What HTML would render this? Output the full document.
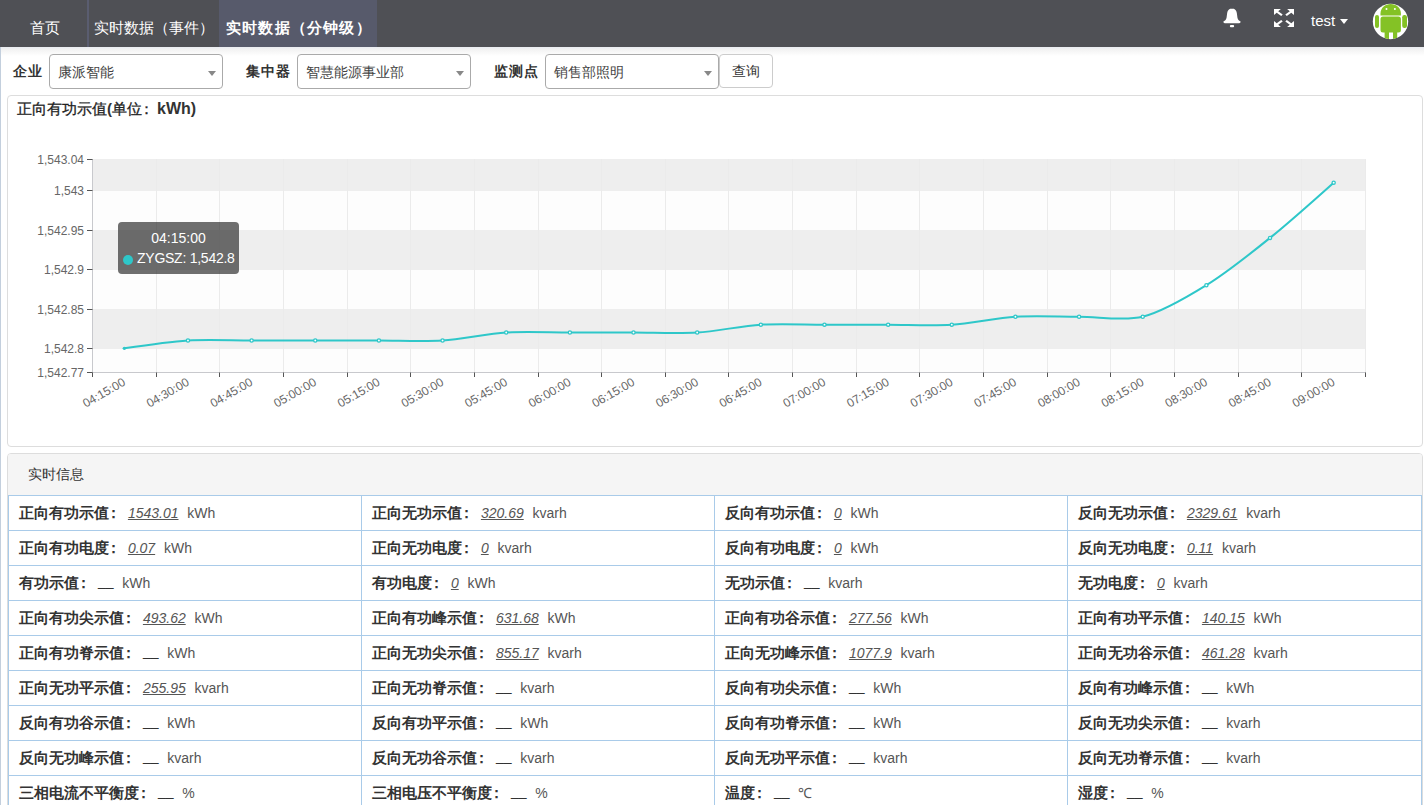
<!DOCTYPE html>
<html><head><meta charset="utf-8">
<style>
*{box-sizing:border-box}
html,body{margin:0;padding:0;width:1424px;height:805px;overflow:hidden;background:#fff;font-family:"Liberation Sans",sans-serif;font-size:14px;color:#333}
.abs{position:absolute}
#hdr{position:absolute;left:0;top:0;width:1424px;height:47px;background:#4f5055}
.tab{position:absolute;top:0;height:46px;color:#fff;font-size:15px;line-height:20px;padding-top:18px;white-space:nowrap}
#shadow{position:absolute;left:0;top:47px;width:1424px;height:9px;background:linear-gradient(#e9ecf1,#f3f3f3 30%,#fff)}
#sideline{position:absolute;left:0;top:47px;width:1px;height:760px;background:#c3cfdd}
.flab{position:absolute;top:61px;font-weight:bold;font-size:14px;line-height:20px;color:#333;letter-spacing:1px}
.sel{position:absolute;top:54px;width:174px;height:35px;border:1px solid #aaa;border-radius:4px;background:#fff}
.sel span{position:absolute;left:8px;top:7px;line-height:20px;font-size:14px;color:#444}
.sel i{position:absolute;right:6px;top:16px;width:0;height:0;border-left:4px solid transparent;border-right:4px solid transparent;border-top:5px solid #888}
#btn{position:absolute;left:719px;top:54px;width:54px;height:34px;border:1px solid #ccc;border-radius:4px;background:#fff;text-align:center;line-height:32px;color:#333}
#p1{position:absolute;left:7px;top:95px;width:1416px;height:352px;border:1px solid #ddd;border-radius:4px;background:#fff}
#title{position:absolute;left:17px;top:99px;font-weight:bold;font-size:15px;line-height:20px;color:#333}
#tip{position:absolute;left:118px;top:222px;width:121px;height:52px;border-radius:4px;background:rgba(50,50,50,0.7);color:#fff;font-size:14px}
#p2{position:absolute;left:7px;top:453px;width:1416px;height:400px;border:1px solid #ddd;border-radius:4px;background:#fff;overflow:hidden}
#p2h{position:absolute;left:0;top:0;width:100%;height:42px;background:#f5f5f5}
.hl{position:absolute;left:8px;width:1414px;height:1px;background:#a9cbe9}
.vl{position:absolute;top:495px;width:1px;height:320px;background:#a9cbe9}
.cell{position:absolute;height:35px;line-height:35px;margin-top:1px;white-space:nowrap;font-size:14px;color:#555}
.lb{font-weight:bold;color:#333;font-size:15px;line-height:10px}
.cl{position:relative;left:-3px}
.v{font-style:italic;text-decoration:underline;color:#555}
.e{color:#333;position:relative;top:-2px}
.u{color:#555;margin-left:1px}
</style></head><body>
<div id="hdr"></div>
<div class="tab" style="left:0;width:87px;padding-left:30px">首页</div>
<div class="abs" style="left:87px;top:0;width:2px;height:47px;background:#5a5d70"></div>
<div class="tab" style="left:89px;width:130px;padding-left:5px">实时数据（事件）</div>
<div class="abs" style="left:219px;top:0;width:158px;height:47px;background:#575a6b"></div>
<div class="tab" style="left:219px;width:158px;padding-left:7px;font-weight:bold;letter-spacing:1.2px">实时数据（分钟级）</div>
<!-- right icons -->
<svg class="abs" style="left:1220px;top:5px" width="25" height="25" viewBox="0 0 25 25">
<path d="M10.2 3.7L13.8 3.7C15.6 4.5 16.6 6 16.9 8.5L17.4 12.5C17.7 14.5 18.8 15.6 20.6 16.6C20.6 17.6 20 18.3 19.2 18.3L4.8 18.3C4 18.3 3.4 17.6 3.4 16.6C5.2 15.6 6.3 14.5 6.6 12.5L7.1 8.5C7.4 6 8.4 4.5 10.2 3.7Z" fill="#fff"/>
<rect x="9.9" y="20" width="4.2" height="2.2" rx="1" fill="#fff"/>
</svg>
<svg class="abs" style="left:1274px;top:9px" width="20" height="18" viewBox="0 0 20 18">
<defs><path id="fsa" d="M0 0L6.9 0L4.2 2.3L8.7 5.4L7.2 7.0L2.7 3.8L0 6.1Z" fill="#fff"/></defs>
<use href="#fsa"/>
<use href="#fsa" transform="translate(20 0) scale(-1 1)"/>
<use href="#fsa" transform="translate(0 18) scale(1 -1)"/>
<use href="#fsa" transform="translate(20 18) scale(-1 -1)"/>
</svg>
<div class="abs" style="left:1311px;top:11px;color:#fff;font-size:15px;line-height:20px">test</div>
<div class="abs" style="left:1339.5px;top:19px;width:0;height:0;border-left:4.7px solid transparent;border-right:4.7px solid transparent;border-top:5px solid #fff"></div>
<svg class="abs" style="left:1372px;top:3px" width="37" height="37" viewBox="0 0 37 37">
<defs><clipPath id="cc"><circle cx="18.5" cy="18.5" r="17.7"/></clipPath></defs>
<circle cx="18.5" cy="18.5" r="17.7" fill="#fff"/>
<g clip-path="url(#cc)" fill="#84c225">
<path d="M8.5 10.5C8.5 5 13 1 18.7 1C24.4 1 28.9 5 28.9 10.5V12.6H8.5Z"/>
<rect x="8.5" y="13.6" width="20.4" height="16" rx="2.5"/>
<rect x="3" y="12" width="4" height="13" rx="2"/>
<rect x="30.2" y="12" width="4.8" height="13" rx="2.2"/>
<rect x="12.6" y="26" width="4.4" height="14"/>
<rect x="21" y="26" width="4.2" height="14"/>
</g>
<circle cx="14.5" cy="6" r="1" fill="#fff"/><circle cx="22.9" cy="6" r="1" fill="#fff"/>
</svg>
<div id="shadow"></div>
<div id="sideline"></div>
<div class="flab" style="left:13px">企业</div>
<div class="sel" style="left:49px"><span>康派智能</span><i></i></div>
<div class="flab" style="left:246px">集中器</div>
<div class="sel" style="left:297px"><span>智慧能源事业部</span><i></i></div>
<div class="flab" style="left:494px">监测点</div>
<div class="sel" style="left:545px"><span>销售部照明</span><i></i></div>
<div id="btn">查询</div>
<div id="p1"></div>
<div id="title"><span style="font-weight:normal;color:#222;-webkit-text-stroke:0.3px #222">正向有功示值</span>(<span style="font-weight:normal;color:#222;-webkit-text-stroke:0.3px #222">单位<span style="position:relative;left:-3px">：</span></span><span style="font-size:16px">kWh)</span></div>
<svg width="1424" height="805" style="position:absolute;left:0;top:0">
<rect x="92.5" y="159" width="1273" height="213" fill="#fdfdfd"/>
<rect x="92.5" y="159" width="1273" height="32" fill="#eeeeee"/>
<rect x="92.5" y="230" width="1273" height="40" fill="#eeeeee"/>
<rect x="92.5" y="309" width="1273" height="40" fill="#eeeeee"/>
<line x1="156.5" y1="159" x2="156.5" y2="372" stroke="#ebebeb" stroke-width="1"/>
<line x1="219.5" y1="159" x2="219.5" y2="372" stroke="#ebebeb" stroke-width="1"/>
<line x1="283.5" y1="159" x2="283.5" y2="372" stroke="#ebebeb" stroke-width="1"/>
<line x1="347.5" y1="159" x2="347.5" y2="372" stroke="#ebebeb" stroke-width="1"/>
<line x1="410.5" y1="159" x2="410.5" y2="372" stroke="#ebebeb" stroke-width="1"/>
<line x1="474.5" y1="159" x2="474.5" y2="372" stroke="#ebebeb" stroke-width="1"/>
<line x1="538.5" y1="159" x2="538.5" y2="372" stroke="#ebebeb" stroke-width="1"/>
<line x1="601.5" y1="159" x2="601.5" y2="372" stroke="#ebebeb" stroke-width="1"/>
<line x1="665.5" y1="159" x2="665.5" y2="372" stroke="#ebebeb" stroke-width="1"/>
<line x1="728.5" y1="159" x2="728.5" y2="372" stroke="#ebebeb" stroke-width="1"/>
<line x1="792.5" y1="159" x2="792.5" y2="372" stroke="#ebebeb" stroke-width="1"/>
<line x1="856.5" y1="159" x2="856.5" y2="372" stroke="#ebebeb" stroke-width="1"/>
<line x1="919.5" y1="159" x2="919.5" y2="372" stroke="#ebebeb" stroke-width="1"/>
<line x1="983.5" y1="159" x2="983.5" y2="372" stroke="#ebebeb" stroke-width="1"/>
<line x1="1047.5" y1="159" x2="1047.5" y2="372" stroke="#ebebeb" stroke-width="1"/>
<line x1="1110.5" y1="159" x2="1110.5" y2="372" stroke="#ebebeb" stroke-width="1"/>
<line x1="1174.5" y1="159" x2="1174.5" y2="372" stroke="#ebebeb" stroke-width="1"/>
<line x1="1238.5" y1="159" x2="1238.5" y2="372" stroke="#ebebeb" stroke-width="1"/>
<line x1="1301.5" y1="159" x2="1301.5" y2="372" stroke="#ebebeb" stroke-width="1"/>
<line x1="1365.5" y1="159" x2="1365.5" y2="372" stroke="#ebebeb" stroke-width="1"/>
<line x1="92.5" y1="159" x2="92.5" y2="372.5" stroke="#c8c9cd" stroke-width="1"/>
<line x1="92.5" y1="372.5" x2="1366" y2="372.5" stroke="#c8c9cd" stroke-width="1"/>
<line x1="87" y1="372.5" x2="92.5" y2="372.5" stroke="#555" stroke-width="1"/>
<text x="84" y="376.8" text-anchor="end" font-size="12" fill="#666">1,542.77</text>
<line x1="87" y1="348.5" x2="92.5" y2="348.5" stroke="#555" stroke-width="1"/>
<text x="84" y="352.8" text-anchor="end" font-size="12" fill="#666">1,542.8</text>
<line x1="87" y1="309.5" x2="92.5" y2="309.5" stroke="#555" stroke-width="1"/>
<text x="84" y="313.8" text-anchor="end" font-size="12" fill="#666">1,542.85</text>
<line x1="87" y1="269.5" x2="92.5" y2="269.5" stroke="#555" stroke-width="1"/>
<text x="84" y="273.8" text-anchor="end" font-size="12" fill="#666">1,542.9</text>
<line x1="87" y1="230.5" x2="92.5" y2="230.5" stroke="#555" stroke-width="1"/>
<text x="84" y="234.8" text-anchor="end" font-size="12" fill="#666">1,542.95</text>
<line x1="87" y1="190.5" x2="92.5" y2="190.5" stroke="#555" stroke-width="1"/>
<text x="84" y="194.8" text-anchor="end" font-size="12" fill="#666">1,543</text>
<line x1="87" y1="159.5" x2="92.5" y2="159.5" stroke="#555" stroke-width="1"/>
<text x="84" y="163.8" text-anchor="end" font-size="12" fill="#666">1,543.04</text>
<line x1="92.5" y1="372.5" x2="92.5" y2="377" stroke="#555" stroke-width="1"/>
<line x1="156.5" y1="372.5" x2="156.5" y2="377" stroke="#555" stroke-width="1"/>
<line x1="219.5" y1="372.5" x2="219.5" y2="377" stroke="#555" stroke-width="1"/>
<line x1="283.5" y1="372.5" x2="283.5" y2="377" stroke="#555" stroke-width="1"/>
<line x1="347.5" y1="372.5" x2="347.5" y2="377" stroke="#555" stroke-width="1"/>
<line x1="410.5" y1="372.5" x2="410.5" y2="377" stroke="#555" stroke-width="1"/>
<line x1="474.5" y1="372.5" x2="474.5" y2="377" stroke="#555" stroke-width="1"/>
<line x1="538.5" y1="372.5" x2="538.5" y2="377" stroke="#555" stroke-width="1"/>
<line x1="601.5" y1="372.5" x2="601.5" y2="377" stroke="#555" stroke-width="1"/>
<line x1="665.5" y1="372.5" x2="665.5" y2="377" stroke="#555" stroke-width="1"/>
<line x1="728.5" y1="372.5" x2="728.5" y2="377" stroke="#555" stroke-width="1"/>
<line x1="792.5" y1="372.5" x2="792.5" y2="377" stroke="#555" stroke-width="1"/>
<line x1="856.5" y1="372.5" x2="856.5" y2="377" stroke="#555" stroke-width="1"/>
<line x1="919.5" y1="372.5" x2="919.5" y2="377" stroke="#555" stroke-width="1"/>
<line x1="983.5" y1="372.5" x2="983.5" y2="377" stroke="#555" stroke-width="1"/>
<line x1="1047.5" y1="372.5" x2="1047.5" y2="377" stroke="#555" stroke-width="1"/>
<line x1="1110.5" y1="372.5" x2="1110.5" y2="377" stroke="#555" stroke-width="1"/>
<line x1="1174.5" y1="372.5" x2="1174.5" y2="377" stroke="#555" stroke-width="1"/>
<line x1="1238.5" y1="372.5" x2="1238.5" y2="377" stroke="#555" stroke-width="1"/>
<line x1="1301.5" y1="372.5" x2="1301.5" y2="377" stroke="#555" stroke-width="1"/>
<line x1="1365.5" y1="372.5" x2="1365.5" y2="377" stroke="#555" stroke-width="1"/>
<text transform="translate(124.3 381) rotate(-30)" x="0" y="4" text-anchor="end" font-size="12" fill="#666">04:15:00</text>
<text transform="translate(188.0 381) rotate(-30)" x="0" y="4" text-anchor="end" font-size="12" fill="#666">04:30:00</text>
<text transform="translate(251.6 381) rotate(-30)" x="0" y="4" text-anchor="end" font-size="12" fill="#666">04:45:00</text>
<text transform="translate(315.3 381) rotate(-30)" x="0" y="4" text-anchor="end" font-size="12" fill="#666">05:00:00</text>
<text transform="translate(378.9 381) rotate(-30)" x="0" y="4" text-anchor="end" font-size="12" fill="#666">05:15:00</text>
<text transform="translate(442.6 381) rotate(-30)" x="0" y="4" text-anchor="end" font-size="12" fill="#666">05:30:00</text>
<text transform="translate(506.2 381) rotate(-30)" x="0" y="4" text-anchor="end" font-size="12" fill="#666">05:45:00</text>
<text transform="translate(569.9 381) rotate(-30)" x="0" y="4" text-anchor="end" font-size="12" fill="#666">06:00:00</text>
<text transform="translate(633.5 381) rotate(-30)" x="0" y="4" text-anchor="end" font-size="12" fill="#666">06:15:00</text>
<text transform="translate(697.2 381) rotate(-30)" x="0" y="4" text-anchor="end" font-size="12" fill="#666">06:30:00</text>
<text transform="translate(760.8 381) rotate(-30)" x="0" y="4" text-anchor="end" font-size="12" fill="#666">06:45:00</text>
<text transform="translate(824.5 381) rotate(-30)" x="0" y="4" text-anchor="end" font-size="12" fill="#666">07:00:00</text>
<text transform="translate(888.1 381) rotate(-30)" x="0" y="4" text-anchor="end" font-size="12" fill="#666">07:15:00</text>
<text transform="translate(951.8 381) rotate(-30)" x="0" y="4" text-anchor="end" font-size="12" fill="#666">07:30:00</text>
<text transform="translate(1015.4 381) rotate(-30)" x="0" y="4" text-anchor="end" font-size="12" fill="#666">07:45:00</text>
<text transform="translate(1079.1 381) rotate(-30)" x="0" y="4" text-anchor="end" font-size="12" fill="#666">08:00:00</text>
<text transform="translate(1142.7 381) rotate(-30)" x="0" y="4" text-anchor="end" font-size="12" fill="#666">08:15:00</text>
<text transform="translate(1206.4 381) rotate(-30)" x="0" y="4" text-anchor="end" font-size="12" fill="#666">08:30:00</text>
<text transform="translate(1270.0 381) rotate(-30)" x="0" y="4" text-anchor="end" font-size="12" fill="#666">08:45:00</text>
<text transform="translate(1333.7 381) rotate(-30)" x="0" y="4" text-anchor="end" font-size="12" fill="#666">09:00:00</text>
<path d="M124.33 348.33 C124.33 348.33 168.81 341.63 187.97 340.44 C207.00 339.27 232.53 340.44 251.62 340.44 C270.72 340.44 296.18 340.44 315.27 340.44 C334.37 340.44 359.83 340.44 378.93 340.44 C398.02 340.44 423.55 341.62 442.57 340.44 C461.74 339.26 487.06 333.74 506.22 332.56 C525.25 331.38 550.78 332.56 569.88 332.56 C588.97 332.56 614.43 332.56 633.52 332.56 C652.62 332.56 678.15 333.73 697.17 332.56 C716.34 331.37 741.66 325.85 760.82 324.67 C779.85 323.49 805.38 324.67 824.48 324.67 C843.57 324.67 869.03 324.67 888.12 324.67 C907.22 324.67 932.75 325.84 951.77 324.67 C970.94 323.48 996.26 317.96 1015.42 316.78 C1034.45 315.60 1059.98 316.78 1079.07 316.78 C1098.17 316.78 1124.68 321.25 1142.72 316.78 C1162.87 311.78 1188.33 296.40 1206.38 285.22 C1226.52 272.74 1251.51 252.81 1270.02 237.89 C1289.70 222.04 1333.67 182.66 1333.67 182.66" fill="none" stroke="#2ec7c9" stroke-width="2"/>
<circle cx="124.33" cy="348.33" r="1.7" fill="#2ec7c9"/>
<circle cx="187.97" cy="340.44" r="1.6" fill="#fff" stroke="#2ec7c9" stroke-width="1.3"/>
<circle cx="251.62" cy="340.44" r="1.6" fill="#fff" stroke="#2ec7c9" stroke-width="1.3"/>
<circle cx="315.27" cy="340.44" r="1.6" fill="#fff" stroke="#2ec7c9" stroke-width="1.3"/>
<circle cx="378.93" cy="340.44" r="1.6" fill="#fff" stroke="#2ec7c9" stroke-width="1.3"/>
<circle cx="442.57" cy="340.44" r="1.6" fill="#fff" stroke="#2ec7c9" stroke-width="1.3"/>
<circle cx="506.22" cy="332.56" r="1.6" fill="#fff" stroke="#2ec7c9" stroke-width="1.3"/>
<circle cx="569.88" cy="332.56" r="1.6" fill="#fff" stroke="#2ec7c9" stroke-width="1.3"/>
<circle cx="633.52" cy="332.56" r="1.6" fill="#fff" stroke="#2ec7c9" stroke-width="1.3"/>
<circle cx="697.17" cy="332.56" r="1.6" fill="#fff" stroke="#2ec7c9" stroke-width="1.3"/>
<circle cx="760.82" cy="324.67" r="1.6" fill="#fff" stroke="#2ec7c9" stroke-width="1.3"/>
<circle cx="824.48" cy="324.67" r="1.6" fill="#fff" stroke="#2ec7c9" stroke-width="1.3"/>
<circle cx="888.12" cy="324.67" r="1.6" fill="#fff" stroke="#2ec7c9" stroke-width="1.3"/>
<circle cx="951.77" cy="324.67" r="1.6" fill="#fff" stroke="#2ec7c9" stroke-width="1.3"/>
<circle cx="1015.42" cy="316.78" r="1.6" fill="#fff" stroke="#2ec7c9" stroke-width="1.3"/>
<circle cx="1079.07" cy="316.78" r="1.6" fill="#fff" stroke="#2ec7c9" stroke-width="1.3"/>
<circle cx="1142.72" cy="316.78" r="1.6" fill="#fff" stroke="#2ec7c9" stroke-width="1.3"/>
<circle cx="1206.38" cy="285.22" r="1.6" fill="#fff" stroke="#2ec7c9" stroke-width="1.3"/>
<circle cx="1270.02" cy="237.89" r="1.6" fill="#fff" stroke="#2ec7c9" stroke-width="1.3"/>
<circle cx="1333.67" cy="182.66" r="1.6" fill="#fff" stroke="#2ec7c9" stroke-width="1.3"/>
</svg>
<div id="tip">
<div class="abs" style="left:0;top:6px;width:121px;text-align:center;line-height:20px">04:15:00</div>
<div class="abs" style="left:5px;top:33px;width:10px;height:10px;border-radius:5px;background:#2ec7c9"></div>
<div class="abs" style="left:19px;top:26px;line-height:20px;white-space:nowrap;letter-spacing:-0.25px">ZYGSZ: 1,542.8</div>
</div>
<div id="p2"><div id="p2h"></div></div>
<div class="abs" style="left:28px;top:464px;line-height:20px;color:#333">实时信息</div>
<div class="hl" style="top:495px"></div>
<div class="hl" style="top:530px"></div>
<div class="hl" style="top:565px"></div>
<div class="hl" style="top:600px"></div>
<div class="hl" style="top:635px"></div>
<div class="hl" style="top:670px"></div>
<div class="hl" style="top:705px"></div>
<div class="hl" style="top:740px"></div>
<div class="hl" style="top:775px"></div>
<div class="hl" style="top:810px"></div>
<div class="vl" style="left:8px"></div>
<div class="vl" style="left:361px"></div>
<div class="vl" style="left:714px"></div>
<div class="vl" style="left:1067px"></div>
<div class="vl" style="left:1421px"></div>
<div class="cell" style="left:19px;top:495px"><span class="lb">正向有功示值<span class="cl">：</span></span> <span class="v">1543.01</span> &nbsp;<span class="u">kWh</span></div>
<div class="cell" style="left:372px;top:495px"><span class="lb">正向无功示值<span class="cl">：</span></span> <span class="v">320.69</span> &nbsp;<span class="u">kvarh</span></div>
<div class="cell" style="left:725px;top:495px"><span class="lb">反向有功示值<span class="cl">：</span></span> <span class="v">0</span> &nbsp;<span class="u">kWh</span></div>
<div class="cell" style="left:1078px;top:495px"><span class="lb">反向无功示值<span class="cl">：</span></span> <span class="v">2329.61</span> &nbsp;<span class="u">kvarh</span></div>
<div class="cell" style="left:19px;top:530px"><span class="lb">正向有功电度<span class="cl">：</span></span> <span class="v">0.07</span> &nbsp;<span class="u">kWh</span></div>
<div class="cell" style="left:372px;top:530px"><span class="lb">正向无功电度<span class="cl">：</span></span> <span class="v">0</span> &nbsp;<span class="u">kvarh</span></div>
<div class="cell" style="left:725px;top:530px"><span class="lb">反向有功电度<span class="cl">：</span></span> <span class="v">0</span> &nbsp;<span class="u">kWh</span></div>
<div class="cell" style="left:1078px;top:530px"><span class="lb">反向无功电度<span class="cl">：</span></span> <span class="v">0.11</span> &nbsp;<span class="u">kvarh</span></div>
<div class="cell" style="left:19px;top:565px"><span class="lb">有功示值<span class="cl">：</span></span> <span class="e">__</span> &nbsp;<span class="u">kWh</span></div>
<div class="cell" style="left:372px;top:565px"><span class="lb">有功电度<span class="cl">：</span></span> <span class="v">0</span> &nbsp;<span class="u">kWh</span></div>
<div class="cell" style="left:725px;top:565px"><span class="lb">无功示值<span class="cl">：</span></span> <span class="e">__</span> &nbsp;<span class="u">kvarh</span></div>
<div class="cell" style="left:1078px;top:565px"><span class="lb">无功电度<span class="cl">：</span></span> <span class="v">0</span> &nbsp;<span class="u">kvarh</span></div>
<div class="cell" style="left:19px;top:600px"><span class="lb">正向有功尖示值<span class="cl">：</span></span> <span class="v">493.62</span> &nbsp;<span class="u">kWh</span></div>
<div class="cell" style="left:372px;top:600px"><span class="lb">正向有功峰示值<span class="cl">：</span></span> <span class="v">631.68</span> &nbsp;<span class="u">kWh</span></div>
<div class="cell" style="left:725px;top:600px"><span class="lb">正向有功谷示值<span class="cl">：</span></span> <span class="v">277.56</span> &nbsp;<span class="u">kWh</span></div>
<div class="cell" style="left:1078px;top:600px"><span class="lb">正向有功平示值<span class="cl">：</span></span> <span class="v">140.15</span> &nbsp;<span class="u">kWh</span></div>
<div class="cell" style="left:19px;top:635px"><span class="lb">正向有功脊示值<span class="cl">：</span></span> <span class="e">__</span> &nbsp;<span class="u">kWh</span></div>
<div class="cell" style="left:372px;top:635px"><span class="lb">正向无功尖示值<span class="cl">：</span></span> <span class="v">855.17</span> &nbsp;<span class="u">kvarh</span></div>
<div class="cell" style="left:725px;top:635px"><span class="lb">正向无功峰示值<span class="cl">：</span></span> <span class="v">1077.9</span> &nbsp;<span class="u">kvarh</span></div>
<div class="cell" style="left:1078px;top:635px"><span class="lb">正向无功谷示值<span class="cl">：</span></span> <span class="v">461.28</span> &nbsp;<span class="u">kvarh</span></div>
<div class="cell" style="left:19px;top:670px"><span class="lb">正向无功平示值<span class="cl">：</span></span> <span class="v">255.95</span> &nbsp;<span class="u">kvarh</span></div>
<div class="cell" style="left:372px;top:670px"><span class="lb">正向无功脊示值<span class="cl">：</span></span> <span class="e">__</span> &nbsp;<span class="u">kvarh</span></div>
<div class="cell" style="left:725px;top:670px"><span class="lb">反向有功尖示值<span class="cl">：</span></span> <span class="e">__</span> &nbsp;<span class="u">kWh</span></div>
<div class="cell" style="left:1078px;top:670px"><span class="lb">反向有功峰示值<span class="cl">：</span></span> <span class="e">__</span> &nbsp;<span class="u">kWh</span></div>
<div class="cell" style="left:19px;top:705px"><span class="lb">反向有功谷示值<span class="cl">：</span></span> <span class="e">__</span> &nbsp;<span class="u">kWh</span></div>
<div class="cell" style="left:372px;top:705px"><span class="lb">反向有功平示值<span class="cl">：</span></span> <span class="e">__</span> &nbsp;<span class="u">kWh</span></div>
<div class="cell" style="left:725px;top:705px"><span class="lb">反向有功脊示值<span class="cl">：</span></span> <span class="e">__</span> &nbsp;<span class="u">kWh</span></div>
<div class="cell" style="left:1078px;top:705px"><span class="lb">反向无功尖示值<span class="cl">：</span></span> <span class="e">__</span> &nbsp;<span class="u">kvarh</span></div>
<div class="cell" style="left:19px;top:740px"><span class="lb">反向无功峰示值<span class="cl">：</span></span> <span class="e">__</span> &nbsp;<span class="u">kvarh</span></div>
<div class="cell" style="left:372px;top:740px"><span class="lb">反向无功谷示值<span class="cl">：</span></span> <span class="e">__</span> &nbsp;<span class="u">kvarh</span></div>
<div class="cell" style="left:725px;top:740px"><span class="lb">反向无功平示值<span class="cl">：</span></span> <span class="e">__</span> &nbsp;<span class="u">kvarh</span></div>
<div class="cell" style="left:1078px;top:740px"><span class="lb">反向无功脊示值<span class="cl">：</span></span> <span class="e">__</span> &nbsp;<span class="u">kvarh</span></div>
<div class="cell" style="left:19px;top:775px"><span class="lb">三相电流不平衡度<span class="cl">：</span></span> <span class="e">__</span> &nbsp;<span class="u">%</span></div>
<div class="cell" style="left:372px;top:775px"><span class="lb">三相电压不平衡度<span class="cl">：</span></span> <span class="e">__</span> &nbsp;<span class="u">%</span></div>
<div class="cell" style="left:725px;top:775px"><span class="lb">温度<span class="cl">：</span></span> <span class="e">__</span> &nbsp;<span class="u">℃</span></div>
<div class="cell" style="left:1078px;top:775px"><span class="lb">湿度<span class="cl">：</span></span> <span class="e">__</span> &nbsp;<span class="u">%</span></div>
</body></html>
